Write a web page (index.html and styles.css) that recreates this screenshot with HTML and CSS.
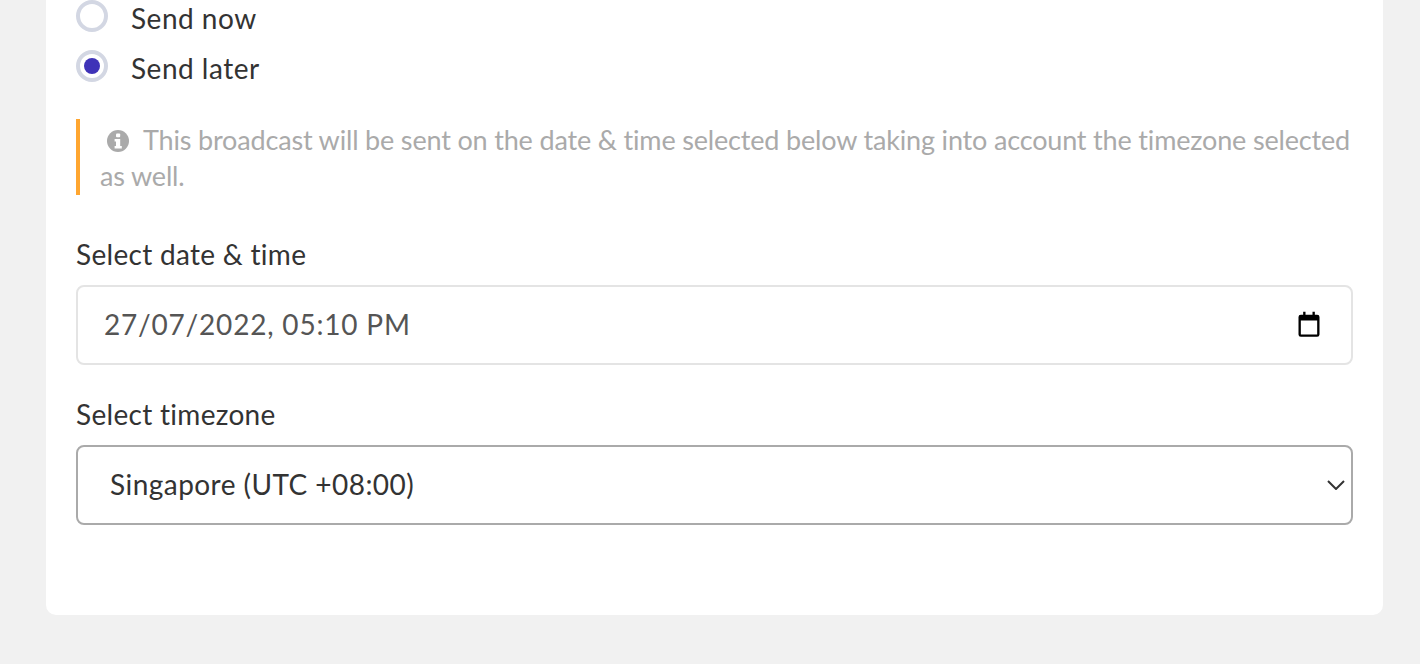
FILE: index.html
```html
<!DOCTYPE html>
<html lang="en">
<head>
<meta charset="utf-8">
<title>Schedule broadcast</title>
<link rel="stylesheet" href="styles.css">
</head>
<body>
<main class="card">
  <div class="radio-group">
    <label class="radio-row"><span class="radio"></span><span class="radio-text">Send now</span></label>
    <label class="radio-row"><span class="radio radio-on"></span><span class="radio-text">Send later</span></label>
  </div>
  <p class="note"><svg class="info" viewBox="0 0 22 22" aria-hidden="true"><circle cx="11" cy="11" r="11" fill="#aaa"/><rect x="9" y="3.6" width="4.2" height="3.6" rx="1" fill="#fff"/><path d="M7.6 9h5.6v7h1.6v2.6H7.6V16h1.4v-4.4H7.6z" fill="#fff"/></svg>This broadcast will be sent on the date &amp; time selected below taking into account the timezone selected as well.</p>
  <div class="field">
    <div class="label">Select date &amp; time</div>
    <div class="control control-date">
      <span class="date-text">27/07/2022, 05:10 PM</span>
      <svg class="calendar" viewBox="0 0 24 24" aria-hidden="true"><path d="M7 1.5h2V4h6V1.5h2V4h2a2 2 0 0 1 2 2v15a2 2 0 0 1-2 2H5a2 2 0 0 1-2-2V6a2 2 0 0 1 2-2h2zM5 9v12h14V9z" fill="#000"/></svg>
    </div>
  </div>
  <div class="field">
    <div class="label">Select timezone</div>
    <div class="control control-select">
      <span class="select-text">Singapore (UTC +08:00)</span>
      <svg class="chevron" viewBox="0 0 18 10" aria-hidden="true"><path d="M1 1l8 8 8-8" fill="none" stroke="#333" stroke-width="2"/></svg>
    </div>
  </div>
</main>
</body>
</html>
```
FILE: styles.css
```css
* { box-sizing: border-box; }
html, body { height: 100%; }
body {
  margin: 0;
  height: 664px;
  overflow: hidden;
  background: #f1f1f1;
  font-family: "Lato", "Noto Sans", sans-serif;
  color: #333;
  font-size: 28px;
  letter-spacing: 0.3px;
}
.card {
  width: 1337px;
  height: 615px;
  margin-left: 46px;
  padding: 0 30px;
  background: #fff;
  border-radius: 0 0 10px 10px;
}
.radio-group { display: flex; flex-direction: column; gap: 18px; }
.radio-row { display: flex; align-items: center; gap: 23px; height: 32px; letter-spacing: 0.5px; }
.radio-text { margin-top: 4px; }
.radio {
  width: 32px; height: 32px;
  border: 4px solid #d3d7e3;
  border-radius: 50%;
  background: #fff;
  display: flex; align-items: center; justify-content: center;
}
.radio-on::after {
  content: "";
  width: 16px; height: 16px;
  border-radius: 50%;
  background: #3f33b8;
}
.note {
  margin: 37px 0 0;
  padding: 3px 0 1px 20px;
  border-left: 4px solid #ffa630;
  color: #aaa;
  font-size: 27px;
  letter-spacing: -0.17px;
  line-height: 36px;
}
.info { width: 22px; height: 22px; margin: 0 14px 0 7px; vertical-align: -2px; }
.field { margin-top: 39px; }
.field + .field { margin-top: 29px; }
.label { line-height: 40px; margin-bottom: 11px; }
.control {
  height: 80px;
  display: flex;
  align-items: center;
  justify-content: space-between;
  border-radius: 8px;
}
.control-date { border: 2px solid #e4e4e4; padding: 0 28px 0 26px; color: #555; }
.date-text { letter-spacing: 0.8px; margin-top: -2px; }
.calendar { width: 28px; height: 28px; margin-top: -3px; }
.control-select { border: 2px solid #aaa; padding: 0 6px 0 32px; }
.select-text { letter-spacing: 0.45px; margin-top: -2px; }
.chevron { width: 18px; height: 10px; }
```
